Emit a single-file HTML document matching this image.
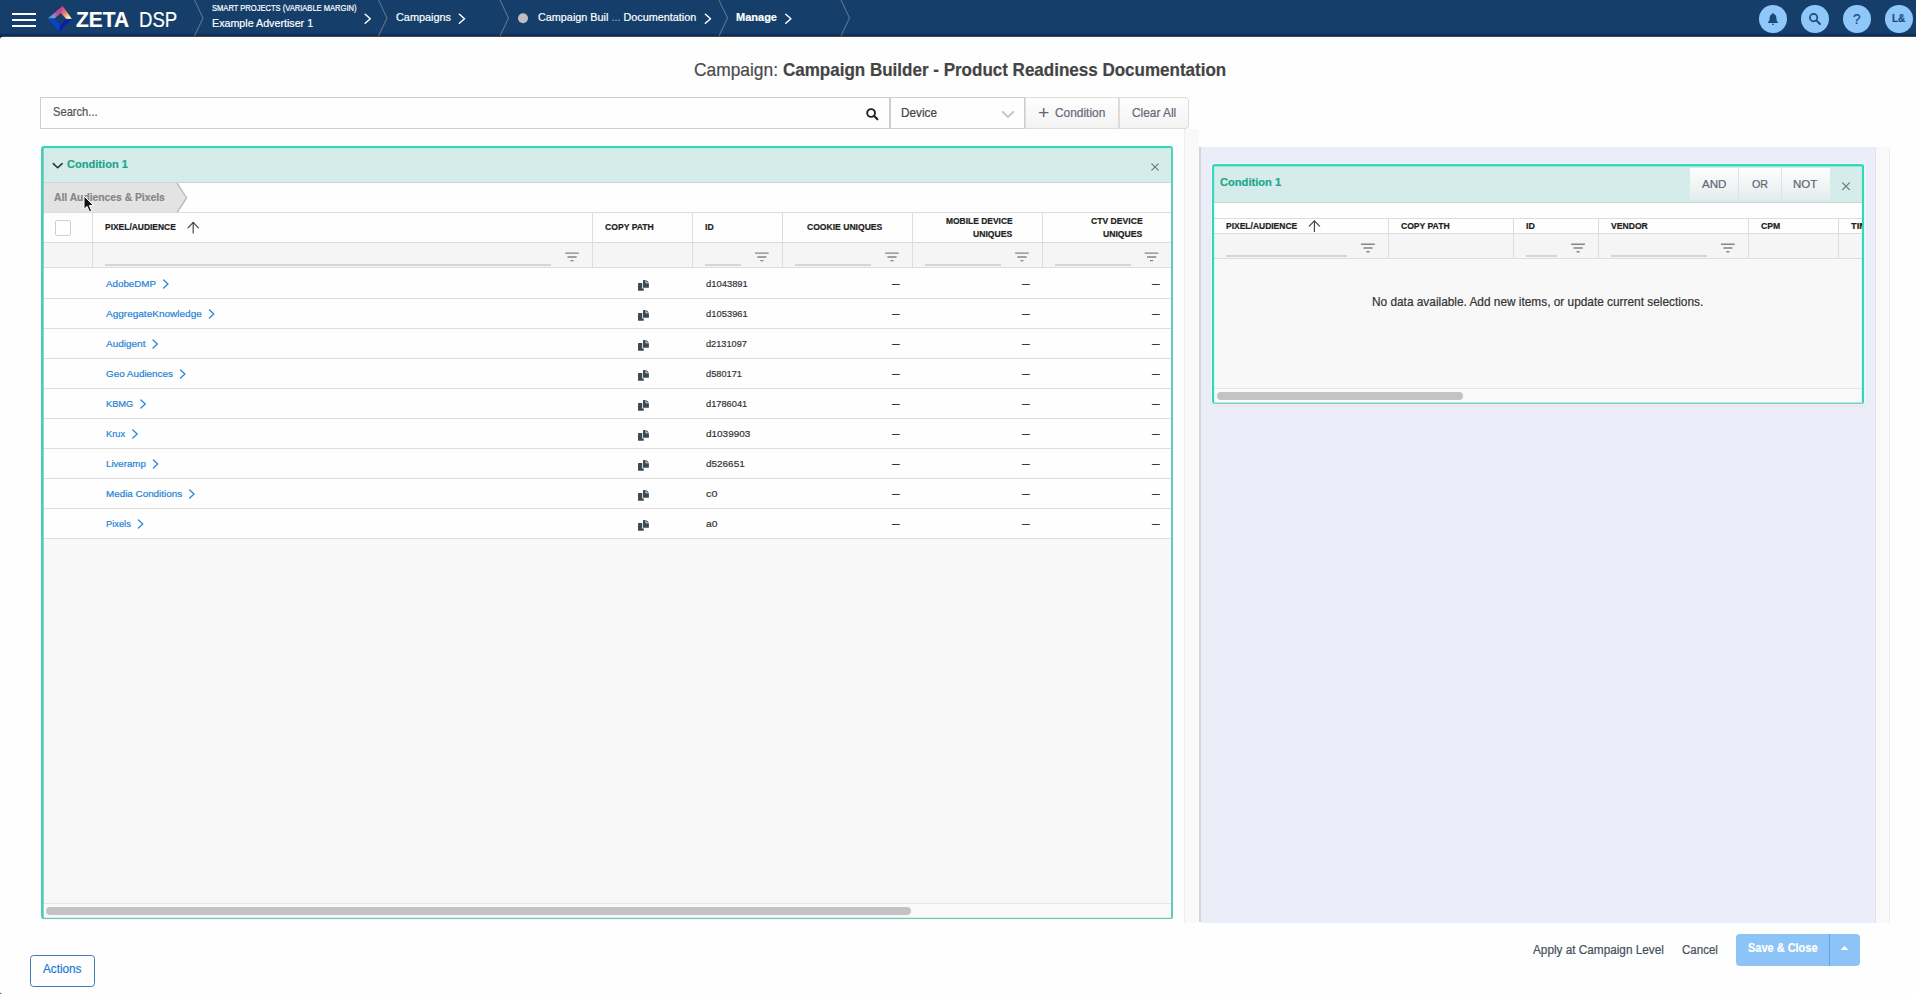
<!DOCTYPE html>
<html lang="en">
<head>
<meta charset="utf-8">
<title>Zeta DSP - Campaign Builder</title>
<style>
html,body{margin:0;padding:0}
body{width:1916px;height:994px;overflow:hidden;background:#153e6a;position:relative;font-family:"Liberation Sans",sans-serif}
.a{position:absolute;box-sizing:border-box}
.t{-webkit-text-stroke:0.2px currentColor;position:absolute;white-space:nowrap;line-height:1.15;display:block;transform-origin:0 0}
#hdr{left:0;top:0;width:1916px;height:38px;background:#153e6a}
#hdrsh{left:0;top:0;width:1916px;height:38px}
#main{left:0;top:0;width:1916px;height:994px}
.bar{left:12px;width:24px;height:2px;background:#fff}
.circ{width:28px;height:28px;border-radius:14px;background:#8fc7fb;top:5px}
.box{border:1px solid #cfcfcf;background:#fefefe}
.btn{border:1px solid #dcdcdc;background:linear-gradient(to bottom,#fefefe 0%,#f3f3f3 100%)}
.teal{border-style:solid;border-width:2px 2.3px 1.4px 2.7px;border-color:#2edab8 #52ccb7 #62cab7 #4ecab5;border-radius:3.5px}
.phead{background:#d6eceb;border-bottom:1px solid #c9d6d6}
.hl{height:1px;background:#dddddd}
.vl{width:1px;background:#dddddd}
.ul{height:2px;background:#d6d6d6}
.frow{background:#f5f5f5}
.thumb{height:8px;border-radius:4px;background:#c1c3c5}
svg{position:absolute;overflow:visible}
</style>
</head>
<body>
<div class="a" id="hdr"></div>
<svg class="a" id="hdrsh" viewBox="0 0 1916 38"><rect x="0" y="33.2" width="1916" height="0.8" fill="rgba(3,16,40,.10)"/><rect x="0" y="34" width="1916" height="1.8" fill="rgba(3,16,40,.26)"/><rect x="0" y="35.8" width="1916" height="1.3" fill="rgba(1,10,30,.86)"/></svg>
<svg class="a" id="main" viewBox="0 0 1916 994"><path d="M0 39.5 Q0 36.75 3 36.75 L1916 36.75 L1916 994 L2.5 994 Q0 994 0 991.5 Z" fill="#fefefe"/></svg>

<!-- hamburger -->
<div class="a bar" style="top:12.6px"></div>
<div class="a bar" style="top:18.6px"></div>
<div class="a bar" style="top:24.6px"></div>

<!-- logo -->
<svg style="left:0;top:0" width="100" height="36" viewBox="0 0 100 36">
  <defs>
    <linearGradient id="lg1" gradientUnits="userSpaceOnUse" x1="48" y1="18.5" x2="62" y2="7">
      <stop offset="0" stop-color="#4a9be2"/><stop offset="0.3" stop-color="#8b90c2"/><stop offset="0.6" stop-color="#c54a9c"/><stop offset="1" stop-color="#d2478c"/>
    </linearGradient>
    <linearGradient id="lg2" gradientUnits="userSpaceOnUse" x1="62" y1="8" x2="71.5" y2="18.5">
      <stop offset="0" stop-color="#cf4a92"/><stop offset="0.4" stop-color="#ee7a6a"/><stop offset="0.7" stop-color="#f4d68c"/><stop offset="1" stop-color="#ffffff"/>
    </linearGradient>
  </defs>
  <polygon points="47.8,18.5 62.6,6.1 60.8,13 54.5,18.6" fill="url(#lg1)"/>
  <polygon points="62.6,6.1 71.8,18.7 66.4,18.9 60.8,13" fill="url(#lg2)"/>
  <polygon points="47.8,18.5 54.5,18.6 60.3,24.9 59.1,31.7" fill="#0a44c6"/>
  <polygon points="66.4,18.9 71.3,19.4 59.1,31.7 60.3,24.9" fill="#0b1fa8"/>
</svg>

<!-- header separators & chevrons -->
<svg style="left:0;top:0" width="1916" height="36" viewBox="0 0 1916 36" fill="none">
  <g stroke="rgba(255,255,255,0.28)" stroke-width="1.1">
    <polyline points="194.5,0 203,18 194.5,36"/>
    <polyline points="378.5,0 387,18 378.5,36"/>
    <polyline points="500,0 508.5,18 500,36"/>
    <polyline points="719,0 727.5,18 719,36"/>
    <polyline points="841,0 849.5,18 841,36"/>
  </g>
  <g stroke="#ffffff" stroke-width="1.5" stroke-linecap="round" stroke-linejoin="round">
    <polyline points="365.2,14.3 370.3,18.8 365.2,23.3"/>
    <polyline points="459.4,14.3 464.5,18.8 459.4,23.3"/>
    <polyline points="705.4,14.3 710.5,18.8 705.4,23.3"/>
    <polyline points="785.8,14.3 790.9,18.8 785.8,23.3"/>
  </g>
  <circle cx="523" cy="18.2" r="5" fill="#bfbfbf"/>
</svg>

<!-- header right icons -->
<div class="a circ" style="left:1758.8px"></div>
<div class="a circ" style="left:1800.6px"></div>
<div class="a circ" style="left:1842.5px"></div>
<div class="a circ" style="left:1884.5px"></div>
<svg style="left:1766px;top:13px" width="14" height="14" viewBox="0 0 14 14">
  <path d="M7 1 C4.6 1 3.6 3 3.6 5.2 C3.6 7.4 2.9 8.3 2.1 9 L2.1 9.9 L11.9 9.9 L11.9 9 C11.1 8.3 10.4 7.4 10.4 5.2 C10.4 3 9.4 1 7 1 Z" fill="#1b4a7a"/>
  <rect x="6.3" y="0.2" width="1.4" height="1.6" fill="#1b4a7a"/>
  <path d="M5.9 10.8 L8.1 10.8 C8.1 11.6 7.6 12 7 12 C6.4 12 5.9 11.6 5.9 10.8 Z" fill="#1b4a7a"/>
</svg>
<svg style="left:1808px;top:12px" width="14" height="14" viewBox="0 0 14 14" fill="none" stroke="#1b4a7a">
  <circle cx="5.6" cy="5.6" r="3.7" stroke-width="1.7"/>
  <line x1="8.4" y1="8.4" x2="12" y2="12" stroke-width="1.9" stroke-linecap="round"/>
</svg>

<!-- search row -->
<div class="a box" style="left:40px;top:97px;width:850px;height:32px"></div>
<div class="a box" style="left:890px;top:97px;width:135px;height:32px"></div>
<div class="a btn" style="left:1025px;top:97px;width:94px;height:32px"></div>
<div class="a btn" style="left:1119px;top:97px;width:70px;height:32px;border-radius:0 4px 4px 0"></div>
<svg style="left:865px;top:107px" width="14" height="14" viewBox="0 0 14 14" fill="none" stroke="#222">
  <circle cx="6.1" cy="6" r="3.9" stroke-width="1.9"/>
  <line x1="9.2" y1="9.1" x2="12.4" y2="12.3" stroke-width="2.1" stroke-linecap="round"/>
</svg>
<svg style="left:1001px;top:110px" width="14" height="9" viewBox="0 0 14 9" fill="none" stroke="#c6c6c6" stroke-width="1.9" stroke-linecap="round" stroke-linejoin="round">
  <polyline points="1.6,1.8 7,7 12.4,1.8"/>
</svg>


<!-- LEFT PANEL -->
<div class="a" style="left:41.5px;top:146.5px;width:1131px;height:772px;background:#f8f8f8;border-radius:3px"></div>
<div class="a phead" style="left:43px;top:148px;width:1128px;height:35px"></div>
<div class="a" style="left:43px;top:183px;width:1128px;height:356px;background:#fefefe"></div>
<svg style="left:43px;top:183px" width="150" height="30" viewBox="0 0 150 30">
  <polygon points="0,0 134,0 143.6,14.9 134,29.5 0,29.5" fill="#e3e3e4"/>
  <polyline points="134,0 143.6,14.9 134,29.5" fill="none" stroke="#bdbdbd" stroke-width="1.4"/>
</svg>
<div class="a frow" style="left:43px;top:243px;width:1128px;height:25px"></div>
<!-- horizontal lines -->
<div class="a hl" style="left:43px;top:212px;width:1128px"></div>
<div class="a hl" style="left:43px;top:242px;width:1128px"></div>
<div class="a hl" style="left:43px;top:267px;width:1128px"></div>
<div class="a hl" style="left:43px;top:298px;width:1128px"></div>
<div class="a hl" style="left:43px;top:328px;width:1128px"></div>
<div class="a hl" style="left:43px;top:358px;width:1128px"></div>
<div class="a hl" style="left:43px;top:388px;width:1128px"></div>
<div class="a hl" style="left:43px;top:418px;width:1128px"></div>
<div class="a hl" style="left:43px;top:448px;width:1128px"></div>
<div class="a hl" style="left:43px;top:478px;width:1128px"></div>
<div class="a hl" style="left:43px;top:508px;width:1128px"></div>
<div class="a hl" style="left:43px;top:538px;width:1128px"></div>
<div class="a hl" style="left:43px;top:903px;width:1128px;background:#e5e5e7"></div>
<div class="a" style="left:43px;top:904px;width:1128px;height:14px;background:#f9f9f9"></div>
<div class="a thumb" style="left:46px;top:907px;width:865px"></div>
<!-- vertical lines -->
<div class="a vl" style="left:92px;top:212px;height:56px"></div>
<div class="a vl" style="left:592px;top:212px;height:56px"></div>
<div class="a vl" style="left:692px;top:212px;height:56px"></div>
<div class="a vl" style="left:782px;top:212px;height:56px"></div>
<div class="a vl" style="left:912px;top:212px;height:56px"></div>
<div class="a vl" style="left:1042px;top:212px;height:56px"></div>
<!-- checkbox -->
<div class="a" style="left:55px;top:220px;width:16px;height:16px;border:1px solid #cfcfcf;border-radius:2px;background:#fff"></div>
<!-- filter underlines -->
<div class="a ul" style="left:105px;top:264px;height:1.8px;width:446px"></div>
<div class="a ul" style="left:704.5px;top:264px;height:1.8px;width:36px"></div>
<div class="a ul" style="left:794.5px;top:264px;height:1.8px;width:76px"></div>
<div class="a ul" style="left:925px;top:264px;height:1.8px;width:76px"></div>
<div class="a ul" style="left:1054.5px;top:264px;height:1.8px;width:76px"></div>
<!-- panel border on top -->

<!-- splitter -->
<div class="a" style="left:1184px;top:129px;width:15px;height:793.5px;background:#f9f9fa;border-left:1px solid #eeeef0"></div>
<div class="a" style="left:1199px;top:147px;width:2px;height:775px;background:#d4d6d6"></div>

<!-- RIGHT PANEL -->
<div class="a" style="left:1201px;top:147px;width:674px;height:775.5px;background:#ebedf9"></div>
<div class="a" style="left:1875px;top:147px;width:15px;height:775.5px;background:#f9f9f9;border-left:1px solid #e2e2e6;border-right:1px solid #ededed"></div>
<div class="a" style="left:1212px;top:164px;width:653px;height:240px;border-radius:3.5px;box-shadow:0 0 0 1px rgba(255,255,255,.7),0 1px 3px rgba(0,0,0,.10);background:#f8f8f8"></div>
<div class="a phead" style="left:1214px;top:166px;width:649px;height:37px"></div>
<div class="a" style="left:1214px;top:203px;width:649px;height:31px;background:#fefefe"></div>
<div class="a frow" style="left:1214px;top:234px;width:649px;height:24px"></div>
<div class="a hl" style="left:1214px;top:218px;width:649px"></div>
<div class="a hl" style="left:1214px;top:233px;width:649px"></div>
<div class="a hl" style="left:1214px;top:258px;width:649px"></div>
<div class="a hl" style="left:1214px;top:388px;width:649px;background:#e5e5e7"></div>
<div class="a" style="left:1214px;top:389px;width:649px;height:14px;background:#f9f9f9"></div>
<div class="a thumb" style="left:1217px;top:392px;width:246px"></div>
<div class="a vl" style="left:1388px;top:218px;height:40px"></div>
<div class="a vl" style="left:1513px;top:218px;height:40px"></div>
<div class="a vl" style="left:1598px;top:218px;height:40px"></div>
<div class="a vl" style="left:1748px;top:218px;height:40px"></div>
<div class="a vl" style="left:1838px;top:218px;height:40px"></div>
<div class="a ul" style="left:1226px;top:255px;width:120.5px;height:1.8px"></div>
<div class="a ul" style="left:1526px;top:255px;width:31px;height:1.8px"></div>
<div class="a ul" style="left:1611px;top:255px;width:96px;height:1.8px"></div>
<!-- AND OR NOT -->
<div class="a" style="left:1690px;top:168px;width:139.5px;height:32px;background:linear-gradient(to bottom,#fdfefe 0%,#f3f6f6 45%,#e3ecec 100%)"></div>
<div class="a" style="left:1738px;top:168px;width:1px;height:32px;background:#dde3e3"></div>
<div class="a" style="left:1780.5px;top:168px;width:1px;height:32px;background:#dde3e3"></div>

<!-- bottom buttons -->
<div class="a" style="left:1736px;top:934px;width:124px;height:32px;background:#8cc4f8;border-radius:4px"></div>
<div class="a" style="left:1829px;top:934px;width:1px;height:32px;background:#5fa6e6"></div>
<svg style="left:1840px;top:945px" width="9" height="6" viewBox="0 0 9 6"><polygon points="0.6,5 4.5,1 8.4,5" fill="#fff"/></svg>
<div class="a" style="left:30px;top:955px;width:65px;height:32px;border:1px solid #3f7ab6;border-radius:3.5px;background:#fefefe"></div>

<!-- panel borders -->
<svg style="left:0;top:0" width="1916" height="994" viewBox="0 0 1916 994">
  <defs>
    <clipPath id="cpL"><rect x="41" y="146" width="1132.1" height="773.2" rx="3.5" ry="3.5"/></clipPath>
    <clipPath id="cpR"><rect x="1212" y="164" width="652.3" height="240" rx="3.5" ry="3.5"/></clipPath>
  </defs>
  <g clip-path="url(#cpL)">
    <rect x="41" y="146" width="2.7" height="774" fill="#4ecab5"/>
    <rect x="1171" y="146" width="2.2" height="774" fill="#5ccdb8"/>
    <rect x="41" y="917.8" width="1133" height="1.5" fill="#68cab8"/>
    <rect x="41" y="146" width="1133" height="2.1" fill="#2edab8"/>
  </g>
  <g clip-path="url(#cpR)">
    <rect x="1212" y="164" width="2.15" height="240" fill="#2edab8"/>
    <rect x="1861.9" y="164" width="2.5" height="240" fill="#2edab8"/>
    <rect x="1212" y="402.6" width="653" height="1.5" fill="#6ccdb9"/>
    <rect x="1212" y="164" width="653" height="2.4" fill="#2edab8"/>
  </g>
</svg>
<!-- icons for left panel -->
<svg style="left:0;top:0" width="1916" height="994" viewBox="0 0 1916 994" fill="none">
  <!-- chevron down -->
  <polyline points="53.3,163.6 57.7,167.8 62.1,163.6" stroke="#22313c" stroke-width="1.5" stroke-linecap="round" stroke-linejoin="round"/>
  <!-- close x -->
  <g stroke="#6b7680" stroke-width="1.2" stroke-linecap="round">
    <line x1="1151.8" y1="163.8" x2="1158.2" y2="170.2"/><line x1="1158.2" y1="163.8" x2="1151.8" y2="170.2"/>
    <line x1="1842.6" y1="182.8" x2="1849.4" y2="189.6"/><line x1="1849.4" y1="182.8" x2="1842.6" y2="189.6"/>
  </g>
  <!-- sort arrows -->
  <g stroke="#444" stroke-width="1.2" stroke-linecap="round" stroke-linejoin="round">
    <line x1="193.2" y1="222.6" x2="193.2" y2="233"/><polyline points="188,227.8 193.2,222.4 198.4,227.8"/>
    <line x1="1314.4" y1="221" x2="1314.4" y2="231.4"/><polyline points="1309.2,226.2 1314.4,220.8 1319.6,226.2"/>
  </g>
</svg>
<svg style="left:0;top:0" width="1916" height="994" viewBox="0 0 1916 994" fill="none" stroke="#858585" stroke-width="1.4"><path d="M565.2 253.15h13.7M567.5 256.95h9.2M570.5 260.65h3.1"/><path d="M755 253.15h13.7M757.3 256.95h9.2M760.3 260.65h3.1"/><path d="M885.1 253.15h13.7M887.4 256.95h9.2M890.4 260.65h3.1"/><path d="M1015.1 253.15h13.7M1017.4 256.95h9.2M1020.4 260.65h3.1"/><path d="M1144.7 253.15h13.7M1147.0 256.95h9.2M1150.0 260.65h3.1"/><path d="M1361.1 244.2h13.7M1363.4 248.00h9.2M1366.4 251.70h3.1"/><path d="M1571.2 244.2h13.7M1573.5 248.00h9.2M1576.5 251.70h3.1"/><path d="M1721 244.2h13.7M1723.3 248.00h9.2M1726.3 251.70h3.1"/></svg>
<svg style="left:0;top:0" width="1916" height="994" viewBox="0 0 1916 994"><g fill="none" stroke="#2b87d8" stroke-width="1.3" stroke-linecap="round" stroke-linejoin="round"><polyline points="163.6,280.0 168.0,284.0 163.6,288.0"/><polyline points="209.4,310.0 213.8,314.0 209.4,318.0"/><polyline points="153.0,340.0 157.4,344.0 153.0,348.0"/><polyline points="180.5,370.0 184.9,374.0 180.5,378.0"/><polyline points="140.9,400.0 145.3,404.0 140.9,408.0"/><polyline points="132.8,430.0 137.2,434.0 132.8,438.0"/><polyline points="153.4,460.0 157.8,464.0 153.4,468.0"/><polyline points="189.7,490.0 194.1,494.0 189.7,498.0"/><polyline points="138.4,520.0 142.8,524.0 138.4,528.0"/></g><g fill="#3d4a52"><path d="M638 283.7q0 -0.6 0.6 -0.6h3.6v5.5h1.6v1.6q0 0.6 -0.6 0.6h-4.6q-0.6 0 -0.6 -0.6z"/><path d="M643 280.6q0 -0.5 0.5 -0.5h2.1v3.1h3.3v4.1q0 0.5 -0.5 0.5h-4.9q-0.5 0 -0.5 -0.5z"/><path d="M646.3 280.1l2.6 2.5h-2.6z"/><path d="M638 313.7q0 -0.6 0.6 -0.6h3.6v5.5h1.6v1.6q0 0.6 -0.6 0.6h-4.6q-0.6 0 -0.6 -0.6z"/><path d="M643 310.6q0 -0.5 0.5 -0.5h2.1v3.1h3.3v4.1q0 0.5 -0.5 0.5h-4.9q-0.5 0 -0.5 -0.5z"/><path d="M646.3 310.1l2.6 2.5h-2.6z"/><path d="M638 343.7q0 -0.6 0.6 -0.6h3.6v5.5h1.6v1.6q0 0.6 -0.6 0.6h-4.6q-0.6 0 -0.6 -0.6z"/><path d="M643 340.6q0 -0.5 0.5 -0.5h2.1v3.1h3.3v4.1q0 0.5 -0.5 0.5h-4.9q-0.5 0 -0.5 -0.5z"/><path d="M646.3 340.1l2.6 2.5h-2.6z"/><path d="M638 373.7q0 -0.6 0.6 -0.6h3.6v5.5h1.6v1.6q0 0.6 -0.6 0.6h-4.6q-0.6 0 -0.6 -0.6z"/><path d="M643 370.6q0 -0.5 0.5 -0.5h2.1v3.1h3.3v4.1q0 0.5 -0.5 0.5h-4.9q-0.5 0 -0.5 -0.5z"/><path d="M646.3 370.1l2.6 2.5h-2.6z"/><path d="M638 403.7q0 -0.6 0.6 -0.6h3.6v5.5h1.6v1.6q0 0.6 -0.6 0.6h-4.6q-0.6 0 -0.6 -0.6z"/><path d="M643 400.6q0 -0.5 0.5 -0.5h2.1v3.1h3.3v4.1q0 0.5 -0.5 0.5h-4.9q-0.5 0 -0.5 -0.5z"/><path d="M646.3 400.1l2.6 2.5h-2.6z"/><path d="M638 433.7q0 -0.6 0.6 -0.6h3.6v5.5h1.6v1.6q0 0.6 -0.6 0.6h-4.6q-0.6 0 -0.6 -0.6z"/><path d="M643 430.6q0 -0.5 0.5 -0.5h2.1v3.1h3.3v4.1q0 0.5 -0.5 0.5h-4.9q-0.5 0 -0.5 -0.5z"/><path d="M646.3 430.1l2.6 2.5h-2.6z"/><path d="M638 463.7q0 -0.6 0.6 -0.6h3.6v5.5h1.6v1.6q0 0.6 -0.6 0.6h-4.6q-0.6 0 -0.6 -0.6z"/><path d="M643 460.6q0 -0.5 0.5 -0.5h2.1v3.1h3.3v4.1q0 0.5 -0.5 0.5h-4.9q-0.5 0 -0.5 -0.5z"/><path d="M646.3 460.1l2.6 2.5h-2.6z"/><path d="M638 493.7q0 -0.6 0.6 -0.6h3.6v5.5h1.6v1.6q0 0.6 -0.6 0.6h-4.6q-0.6 0 -0.6 -0.6z"/><path d="M643 490.6q0 -0.5 0.5 -0.5h2.1v3.1h3.3v4.1q0 0.5 -0.5 0.5h-4.9q-0.5 0 -0.5 -0.5z"/><path d="M646.3 490.1l2.6 2.5h-2.6z"/><path d="M638 523.7q0 -0.6 0.6 -0.6h3.6v5.5h1.6v1.6q0 0.6 -0.6 0.6h-4.6q-0.6 0 -0.6 -0.6z"/><path d="M643 520.6q0 -0.5 0.5 -0.5h2.1v3.1h3.3v4.1q0 0.5 -0.5 0.5h-4.9q-0.5 0 -0.5 -0.5z"/><path d="M646.3 520.1l2.6 2.5h-2.6z"/></g></svg>


<span class="t" style="left:76.0px;top:6.50px;font-size:22.6px;font-weight:700;color:#fff;transform:scaleX(0.9248)">ZETA</span>
<span class="t" style="left:138.8px;top:6.50px;font-size:22.6px;color:#fff;transform:scaleX(0.8221)">DSP</span>
<span class="t" style="left:212.2px;top:2.90px;font-size:8.7px;color:#fff;transform:scaleX(0.8702)">SMART PROJECTS (VARIABLE MARGIN)</span>
<span class="t" style="left:212.2px;top:15.80px;font-size:11.6px;color:#fff;transform:scaleX(0.9229)">Example Advertiser 1</span>
<span class="t" style="left:395.8px;top:9.90px;font-size:11.6px;color:#fff;transform:scaleX(0.9377)">Campaigns</span>
<span class="t" style="left:538.2px;top:9.90px;font-size:11.6px;color:#fff;transform:scaleX(0.9333)">Campaign Buil <span style="color:#7db8f2">...</span> Documentation</span>
<span class="t" style="left:735.9px;top:9.90px;font-size:11.6px;font-weight:700;color:#fff;transform:scaleX(0.9497)">Manage</span>
<span class="t" style="left:1892.2px;top:12.40px;font-size:10.8px;font-weight:700;color:#1b4a7a;transform:scaleX(0.9232)">L&amp;</span>
<span class="t" style="left:1853.2px;top:10.80px;font-size:14.5px;color:#1b4a7a;transform:scaleX(0.9408)">?</span>
<span class="t" style="left:694.0px;top:60.40px;font-size:18.2px;color:#4a4a4a;transform:scaleX(0.9549)">Campaign:</span>
<span class="t" style="left:783.0px;top:60.40px;font-size:18.2px;font-weight:700;color:#444;transform:scaleX(0.9351)">Campaign Builder - Product Readiness Documentation</span>
<span class="t" style="left:53.0px;top:105.10px;font-size:12.6px;color:#555;transform:scaleX(0.8848)">Search...</span>
<span class="t" style="left:901.3px;top:105.60px;font-size:12.6px;color:#444;transform:scaleX(0.9351)">Device</span>
<span class="t" style="left:1055.1px;top:106.20px;font-size:12.6px;color:#5f6975;transform:scaleX(0.9452)">Condition</span>
<span class="t" style="left:1132.0px;top:106.20px;font-size:12.6px;color:#5f6975;transform:scaleX(0.9423)">Clear All</span>
<span class="t" style="left:67.3px;top:157.10px;font-size:11.6px;font-weight:700;color:#1aa78c;transform:scaleX(0.9551)">Condition 1</span>
<span class="t" style="left:54.0px;top:189.90px;font-size:11.6px;font-weight:700;color:#868686;transform:scaleX(0.8894)">All Audiences &amp; Pixels</span>
<span class="t" style="left:105.2px;top:222.10px;font-size:9.2px;font-weight:700;color:#222;transform:scaleX(0.9184)">PIXEL/AUDIENCE</span>
<span class="t" style="left:605.0px;top:222.10px;font-size:9.2px;font-weight:700;color:#222;transform:scaleX(0.9371)">COPY PATH</span>
<span class="t" style="left:704.7px;top:222.10px;font-size:9.2px;font-weight:700;color:#222;transform:scaleX(0.9361)">ID</span>
<span class="t" style="left:807.2px;top:222.10px;font-size:9.2px;font-weight:700;color:#222;transform:scaleX(0.9336)">COOKIE UNIQUES</span>
<span class="t" style="left:945.8px;top:216.20px;font-size:9.2px;font-weight:700;color:#222;transform:scaleX(0.9200)">MOBILE DEVICE</span>
<span class="t" style="left:973.3px;top:229.10px;font-size:9.2px;font-weight:700;color:#222;transform:scaleX(0.9361)">UNIQUES</span>
<span class="t" style="left:1090.8px;top:216.20px;font-size:9.2px;font-weight:700;color:#222;transform:scaleX(0.9376)">CTV DEVICE</span>
<span class="t" style="left:1103.2px;top:229.10px;font-size:9.2px;font-weight:700;color:#222;transform:scaleX(0.9385)">UNIQUES</span>
<span class="t" style="left:106.2px;top:277.90px;font-size:9.9px;color:#2482d6;transform:scaleX(0.9901)">AdobeDMP</span>
<span class="t" style="left:705.8px;top:278.10px;font-size:9.9px;color:#333;transform:scaleX(0.9514)">d1043891</span>
<span class="t" style="left:106.2px;top:307.90px;font-size:9.9px;color:#2482d6;transform:scaleX(1.0144)">AggregateKnowledge</span>
<span class="t" style="left:705.8px;top:308.10px;font-size:9.9px;color:#333;transform:scaleX(0.9514)">d1053961</span>
<span class="t" style="left:106.2px;top:337.90px;font-size:9.9px;color:#2482d6;transform:scaleX(1.0107)">Audigent</span>
<span class="t" style="left:705.8px;top:338.10px;font-size:9.9px;color:#333;transform:scaleX(0.9331)">d2131097</span>
<span class="t" style="left:106.2px;top:367.90px;font-size:9.9px;color:#2482d6;transform:scaleX(0.9987)">Geo Audiences</span>
<span class="t" style="left:705.8px;top:368.10px;font-size:9.9px;color:#333;transform:scaleX(0.9336)">d580171</span>
<span class="t" style="left:106.2px;top:397.90px;font-size:9.9px;color:#2482d6;transform:scaleX(0.9383)">KBMG</span>
<span class="t" style="left:705.8px;top:398.10px;font-size:9.9px;color:#333;transform:scaleX(0.9377)">d1786041</span>
<span class="t" style="left:106.2px;top:427.90px;font-size:9.9px;color:#2482d6;transform:scaleX(0.9452)">Krux</span>
<span class="t" style="left:705.8px;top:428.10px;font-size:9.9px;color:#333;transform:scaleX(1.0083)">d1039903</span>
<span class="t" style="left:106.2px;top:457.90px;font-size:9.9px;color:#2482d6;transform:scaleX(0.9797)">Liveramp</span>
<span class="t" style="left:705.8px;top:458.10px;font-size:9.9px;color:#333;transform:scaleX(1.0064)">d526651</span>
<span class="t" style="left:106.2px;top:487.90px;font-size:9.9px;color:#2482d6;transform:scaleX(0.9972)">Media Conditions</span>
<span class="t" style="left:705.8px;top:488.10px;font-size:9.9px;color:#333;transform:scaleX(1.0922)">c0</span>
<span class="t" style="left:106.2px;top:517.90px;font-size:9.9px;color:#2482d6;transform:scaleX(0.9414)">Pixels</span>
<span class="t" style="left:705.8px;top:518.10px;font-size:9.9px;color:#333;transform:scaleX(1.0378)">a0</span>
<span class="t" style="left:892.3px;top:276.60px;font-size:13px;color:#2f3338;transform:scaleX(0.5846)">—</span>
<span class="t" style="left:1022.1px;top:276.60px;font-size:13px;color:#2f3338;transform:scaleX(0.5846)">—</span>
<span class="t" style="left:1151.7px;top:276.60px;font-size:13px;color:#2f3338;transform:scaleX(0.5846)">—</span>
<span class="t" style="left:892.3px;top:306.60px;font-size:13px;color:#2f3338;transform:scaleX(0.5846)">—</span>
<span class="t" style="left:1022.1px;top:306.60px;font-size:13px;color:#2f3338;transform:scaleX(0.5846)">—</span>
<span class="t" style="left:1151.7px;top:306.60px;font-size:13px;color:#2f3338;transform:scaleX(0.5846)">—</span>
<span class="t" style="left:892.3px;top:336.60px;font-size:13px;color:#2f3338;transform:scaleX(0.5846)">—</span>
<span class="t" style="left:1022.1px;top:336.60px;font-size:13px;color:#2f3338;transform:scaleX(0.5846)">—</span>
<span class="t" style="left:1151.7px;top:336.60px;font-size:13px;color:#2f3338;transform:scaleX(0.5846)">—</span>
<span class="t" style="left:892.3px;top:366.60px;font-size:13px;color:#2f3338;transform:scaleX(0.5846)">—</span>
<span class="t" style="left:1022.1px;top:366.60px;font-size:13px;color:#2f3338;transform:scaleX(0.5846)">—</span>
<span class="t" style="left:1151.7px;top:366.60px;font-size:13px;color:#2f3338;transform:scaleX(0.5846)">—</span>
<span class="t" style="left:892.3px;top:396.60px;font-size:13px;color:#2f3338;transform:scaleX(0.5846)">—</span>
<span class="t" style="left:1022.1px;top:396.60px;font-size:13px;color:#2f3338;transform:scaleX(0.5846)">—</span>
<span class="t" style="left:1151.7px;top:396.60px;font-size:13px;color:#2f3338;transform:scaleX(0.5846)">—</span>
<span class="t" style="left:892.3px;top:426.60px;font-size:13px;color:#2f3338;transform:scaleX(0.5846)">—</span>
<span class="t" style="left:1022.1px;top:426.60px;font-size:13px;color:#2f3338;transform:scaleX(0.5846)">—</span>
<span class="t" style="left:1151.7px;top:426.60px;font-size:13px;color:#2f3338;transform:scaleX(0.5846)">—</span>
<span class="t" style="left:892.3px;top:456.60px;font-size:13px;color:#2f3338;transform:scaleX(0.5846)">—</span>
<span class="t" style="left:1022.1px;top:456.60px;font-size:13px;color:#2f3338;transform:scaleX(0.5846)">—</span>
<span class="t" style="left:1151.7px;top:456.60px;font-size:13px;color:#2f3338;transform:scaleX(0.5846)">—</span>
<span class="t" style="left:892.3px;top:486.60px;font-size:13px;color:#2f3338;transform:scaleX(0.5846)">—</span>
<span class="t" style="left:1022.1px;top:486.60px;font-size:13px;color:#2f3338;transform:scaleX(0.5846)">—</span>
<span class="t" style="left:1151.7px;top:486.60px;font-size:13px;color:#2f3338;transform:scaleX(0.5846)">—</span>
<span class="t" style="left:892.3px;top:516.60px;font-size:13px;color:#2f3338;transform:scaleX(0.5846)">—</span>
<span class="t" style="left:1022.1px;top:516.60px;font-size:13px;color:#2f3338;transform:scaleX(0.5846)">—</span>
<span class="t" style="left:1151.7px;top:516.60px;font-size:13px;color:#2f3338;transform:scaleX(0.5846)">—</span>
<span class="t" style="left:1037.6px;top:103.40px;font-size:18px;color:#5f6975;transform:scaleX(1.0746);-webkit-text-stroke:0">+</span>
<span class="t" style="left:1220.2px;top:174.90px;font-size:11.6px;font-weight:700;color:#1aa78c;transform:scaleX(0.9582)">Condition 1</span>
<span class="t" style="left:1701.5px;top:177.10px;font-size:11.6px;color:#5a6672;transform:scaleX(1.0006)">AND</span>
<span class="t" style="left:1751.6px;top:177.10px;font-size:11.6px;color:#5a6672;transform:scaleX(0.9200)">OR</span>
<span class="t" style="left:1792.7px;top:177.10px;font-size:11.6px;color:#5a6672;transform:scaleX(0.9925)">NOT</span>
<span class="t" style="left:1226.0px;top:220.90px;font-size:9.2px;font-weight:700;color:#222;transform:scaleX(0.9236)">PIXEL/AUDIENCE</span>
<span class="t" style="left:1400.7px;top:220.90px;font-size:9.2px;font-weight:700;color:#222;transform:scaleX(0.9332)">COPY PATH</span>
<span class="t" style="left:1526.0px;top:220.90px;font-size:9.2px;font-weight:700;color:#222;transform:scaleX(0.9687)">ID</span>
<span class="t" style="left:1611.0px;top:220.90px;font-size:9.2px;font-weight:700;color:#222;transform:scaleX(0.9361)">VENDOR</span>
<span class="t" style="left:1761.0px;top:220.90px;font-size:9.2px;font-weight:700;color:#222;transform:scaleX(0.9402)">CPM</span>
<span class="t" style="left:1851.4px;top:220.90px;font-size:9.2px;font-weight:700;color:#222;transform:scaleX(1.0067);width:10.9px;overflow:hidden">TIME</span>
<span class="t" style="left:1372.3px;top:295.00px;font-size:12.4px;color:#333;transform:scaleX(0.9560)">No data available. Add new items, or update current selections.</span>
<span class="t" style="left:1532.7px;top:943.40px;font-size:12.5px;color:#444e58;transform:scaleX(0.9418)">Apply at Campaign Level</span>
<span class="t" style="left:1682.0px;top:943.40px;font-size:12.5px;color:#444e58;transform:scaleX(0.9224)">Cancel</span>
<span class="t" style="left:1748.2px;top:942.30px;font-size:12.1px;font-weight:700;color:#fff;transform:scaleX(0.9068)">Save &amp; Close</span>
<span class="t" style="left:43.3px;top:962.90px;font-size:12.0px;color:#1b7ad6;transform:scaleX(0.9756)">Actions</span>

<!-- mouse cursor -->
<svg style="left:83px;top:195px" width="12" height="19" viewBox="0 0 12 19">
  <path d="M1 1 L1 14.2 L4.1 11.4 L6.4 16.8 L8.6 15.8 L6.3 10.6 L10.4 10.4 Z" fill="#111" stroke="#fff" stroke-width="1" stroke-linejoin="round"/>
</svg>
</body>
</html>
